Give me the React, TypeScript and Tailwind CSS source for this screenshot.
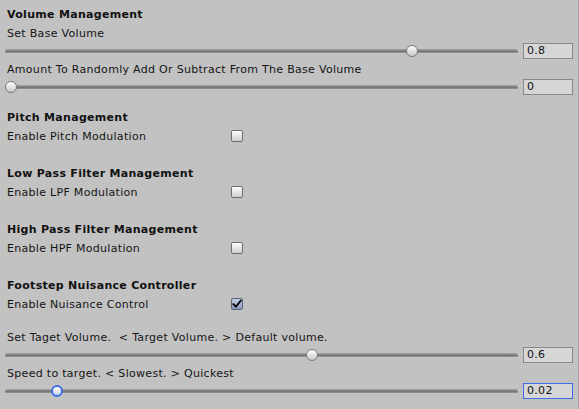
import React from "react";

const font = { fontFamily: '"DejaVu Sans", Verdana, sans-serif' };

function Header({ children }: { children: React.ReactNode }) {
  return (
    <div className="h-[18px] flex items-center pt-[1px] pl-[7px] text-[11px] font-bold tracking-[0.3px] text-[#111]">
      {children}
    </div>
  );
}

function Label({ children }: { children: React.ReactNode }) {
  return (
    <div className="h-[18px] flex items-center pt-[2px] pl-[7px] text-[11px] tracking-[0.3px] text-[#151515] whitespace-pre">
      {children}
    </div>
  );
}

function Slider({ pos, value, focused = false }: { pos: number; value: string; focused?: boolean }) {
  return (
    <div className="h-[18px] flex items-center pl-[5px] pr-[5px]">
      <div className="relative flex-1 mr-[5px] h-[12px] flex items-center">
        <div className="w-full h-[5px] rounded-full bg-gradient-to-b from-[#8c8c8c] via-[#6f6f6f] to-[#e4e4e4] border-t border-[#9e9e9e]" />
        <div
          className={
            focused
              ? "absolute top-0 w-[12px] h-[12px] rounded-full border-2 border-[#3f6fe6] bg-gradient-to-b from-[#ffffff] to-[#c9d3ee]"
              : "absolute top-0 w-[12px] h-[12px] rounded-full border border-[#7a7a7a] bg-gradient-to-b from-[#ffffff] to-[#c8c8c8]"
          }
          style={{ left: `calc(${pos * 100}% - ${pos * 12}px)` }}
        />
      </div>
      <div
        className={
          focused
            ? "w-[50px] h-[16px] flex items-center pl-[3px] pt-[1px] text-[11px] tracking-[0.3px] text-[#111] bg-[#d6d6d6] border border-[#3f6fe6]"
            : "w-[50px] h-[16px] flex items-center pl-[3px] pt-[1px] text-[11px] tracking-[0.3px] text-[#111] bg-[#d6d6d6] border border-[#8a8a8a]"
        }
      >
        {value}
      </div>
    </div>
  );
}

function Toggle({ label, checked = false }: { label: string; checked?: boolean }) {
  return (
    <div className="h-[18px] flex items-center pl-[7px] text-[11px] tracking-[0.3px] text-[#151515]">
      <div className="w-[224px] pt-[2px]">{label}</div>
      <div
        className={
          checked
            ? "w-[12px] h-[12px] rounded-[2px] border border-[#5a6578] bg-gradient-to-b from-[#c4d0e4] to-[#8797b4] flex items-center justify-center"
            : "w-[12px] h-[12px] rounded-[2px] border border-[#6e6e6e] bg-gradient-to-b from-[#ffffff] to-[#cdcdcd]"
        }
      >
        {checked && (
          <svg width="11" height="10" viewBox="0 0 11 10">
            <path d="M1.5 5.2 L4.2 8 L9.8 1.2" fill="none" stroke="#000" strokeWidth="2" strokeLinecap="round" strokeLinejoin="round" />
          </svg>
        )}
      </div>
    </div>
  );
}

export default function App() {
  return (
    <div className="w-[579px] h-[409px] bg-[#c2c2c2] overflow-hidden flex" style={font}>
      <div className="flex-1 flex flex-col pt-[6px]">
        <Header>Volume Management</Header>
        <Label>Set Base Volume</Label>
        <Slider pos={0.8} value="0.8" />
        <Label>Amount To Randomly Add Or Subtract From The Base Volume</Label>
        <Slider pos={0} value="0" />

        <div className="mt-[13px]">
          <Header>Pitch Management</Header>
          <Toggle label="Enable Pitch Modulation" />
        </div>
        <div className="mt-[20px]">
          <Header>Low Pass Filter Management</Header>
          <Toggle label="Enable LPF Modulation" />
        </div>
        <div className="mt-[20px]">
          <Header>High Pass Filter Management</Header>
          <Toggle label="Enable HPF Modulation" />
        </div>
        <div className="mt-[20px]">
          <Header>Footstep Nuisance Controller</Header>
          <Toggle label="Enable Nuisance Control" checked />
        </div>

        <div className="mt-[15px]">
          <Label>{"Set Taget Volume.  < Target Volume. > Default volume."}</Label>
          <Slider pos={0.6} value="0.6" />
          <Label>{"Speed to target. < Slowest. > Quickest"}</Label>
          <Slider pos={0.092} value="0.02" focused />
        </div>
      </div>
      <div className="w-[1px] bg-[#a4a4a4]" />
    </div>
  );
}
